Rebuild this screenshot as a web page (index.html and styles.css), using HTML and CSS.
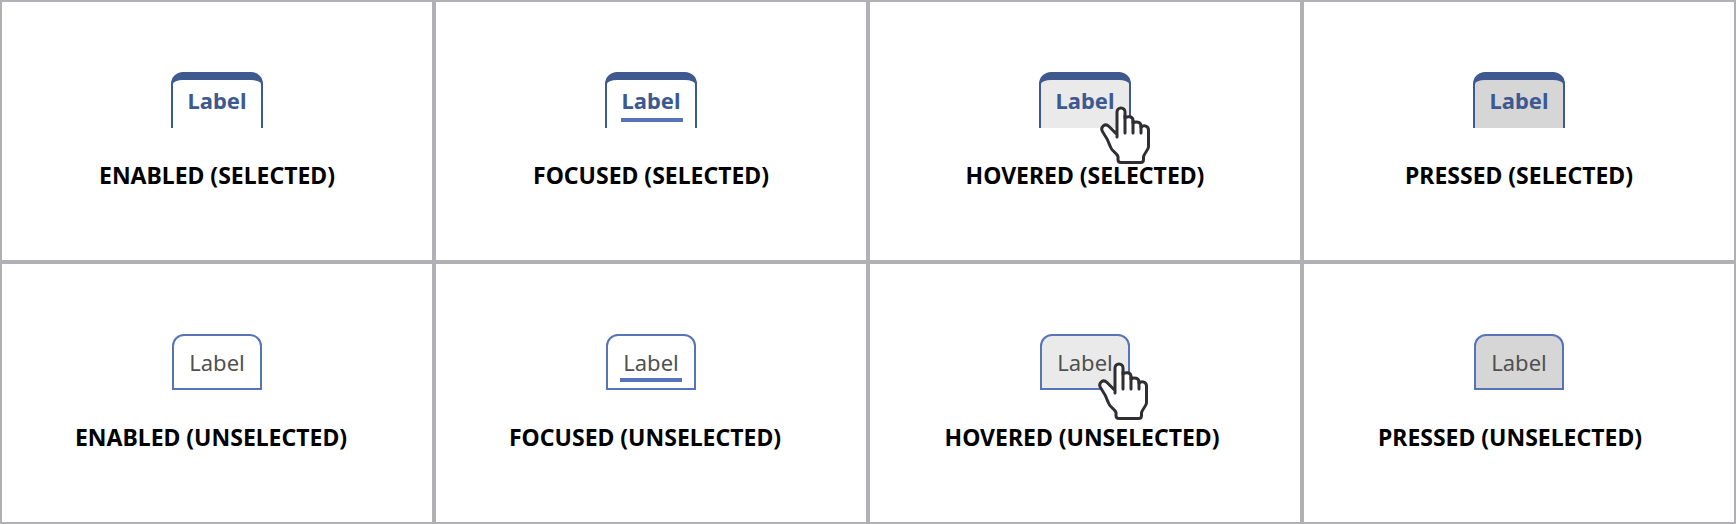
FILE: index.html
```html
<!DOCTYPE html>
<html lang="en">
<head>
  <meta charset="UTF-8">
  <meta name="viewport" content="width=device-width, initial-scale=1.0">
  <title>Tab States</title>
  <link rel="stylesheet" href="styles.css">
</head>
<body>
  <svg class="defs" width="0" height="0" aria-hidden="true">
    <symbol id="hand" viewBox="0 0 50 58">
      <path class="hand-shape" d="M17 31 V6 a4 4 0 0 1 8 0 V12 C27 10 33 10 33 14.500 V17 C36 15 41 16 41 20 V21 C44 18.500 48.500 20 48.500 24 V41 C48.500 44 43.500 48 43.500 51 V53.500 Q43.500 56.500 40.500 56.500 H21 Q18 56.500 18 53.500 V50.500 C17 47 11.500 45 10.500 41 C8.500 35 7 32 2.500 25.500 C0 21 5 16.500 9 20.500 L17 28.500"/>
      <path class="hand-line" d="M25 10 V27 M33 15 V27 M41 20 V27"/>
    </symbol>
  </svg>

  <main class="states">
    <section class="state">
      <button class="tab selected"><span class="tab-text">Label</span></button>
      <h2>ENABLED (SELECTED)</h2>
    </section>
    <section class="state">
      <button class="tab selected focused"><span class="tab-text">Label</span></button>
      <h2>FOCUSED (SELECTED)</h2>
    </section>
    <section class="state">
      <button class="tab selected hovered"><span class="tab-text">Label</span><svg class="cursor" aria-hidden="true"><use href="#hand"/></svg></button>
      <h2>HOVERED (SELECTED)</h2>
    </section>
    <section class="state">
      <button class="tab selected pressed"><span class="tab-text">Label</span></button>
      <h2>PRESSED (SELECTED)</h2>
    </section>
    <section class="state">
      <button class="tab"><span class="tab-text">Label</span></button>
      <h2>ENABLED (UNSELECTED)&nbsp;&nbsp;</h2>
    </section>
    <section class="state">
      <button class="tab focused"><span class="tab-text">Label</span></button>
      <h2>FOCUSED (UNSELECTED)&nbsp;&nbsp;</h2>
    </section>
    <section class="state">
      <button class="tab hovered"><span class="tab-text">Label</span><svg class="cursor" aria-hidden="true"><use href="#hand"/></svg></button>
      <h2>HOVERED (UNSELECTED)&nbsp;</h2>
    </section>
    <section class="state">
      <button class="tab pressed"><span class="tab-text">Label</span></button>
      <h2>PRESSED (UNSELECTED)&nbsp;&nbsp;&nbsp;</h2>
    </section>
  </main>
</body>
</html>
```
FILE: styles.css
```css
* {
  box-sizing: border-box;
}

body {
  margin: 0;
  background-color: #fff;
  font-family: "Segoe UI", "Noto Sans", "Open Sans", sans-serif;
}

.defs {
  display: block;
}

.states {
  display: grid;
  grid-template-columns: repeat(4, 1fr);
}

.state {
  display: flex;
  flex-direction: column;
  align-items: center;
  padding: 70px 0 69px;
  border: 2px solid #b1b0b5;
}

.state h2 {
  margin: 31px 0 0;
  font-size: 23px;
  line-height: 32px;
  font-weight: bold;
  color: #000;
  white-space: nowrap;
}

.tab {
  position: relative;
  display: flex;
  justify-content: center;
  width: 90px;
  height: 56px;
  padding: 10px 0 0;
  border: 2px solid #5574b9;
  border-radius: 12px 12px 0 0;
  background-color: #fff;
  color: #505050;
  font-family: inherit;
  font-size: 22px;
  line-height: 32px;
}

.tab.selected {
  width: 92px;
  padding-top: 4px;
  border-color: #3e5990;
  border-top-width: 8px;
  border-bottom: none;
  color: #3e5990;
  font-weight: bold;
}

.tab.focused::after {
  content: "";
  position: absolute;
  bottom: 6px;
  left: 12px;
  width: 62px;
  height: 4px;
  background-color: #5574b9;
}

.tab.selected.focused::after {
  left: 14px;
}

.tab.hovered {
  background-color: #eaeaea;
}

.tab.pressed {
  background-color: #d6d6d6;
}

.cursor {
  position: absolute;
  top: 26px;
  left: 56px;
  width: 50px;
  height: 58px;
}

.tab.selected .cursor {
  left: 59px;
}

.hand-shape {
  fill: #fff;
  stroke: #2f2f33;
  stroke-width: 3;
  stroke-linejoin: round;
  stroke-linecap: round;
}

.hand-line {
  fill: none;
  stroke: #2f2f33;
  stroke-width: 3;
  stroke-linecap: round;
}
```
